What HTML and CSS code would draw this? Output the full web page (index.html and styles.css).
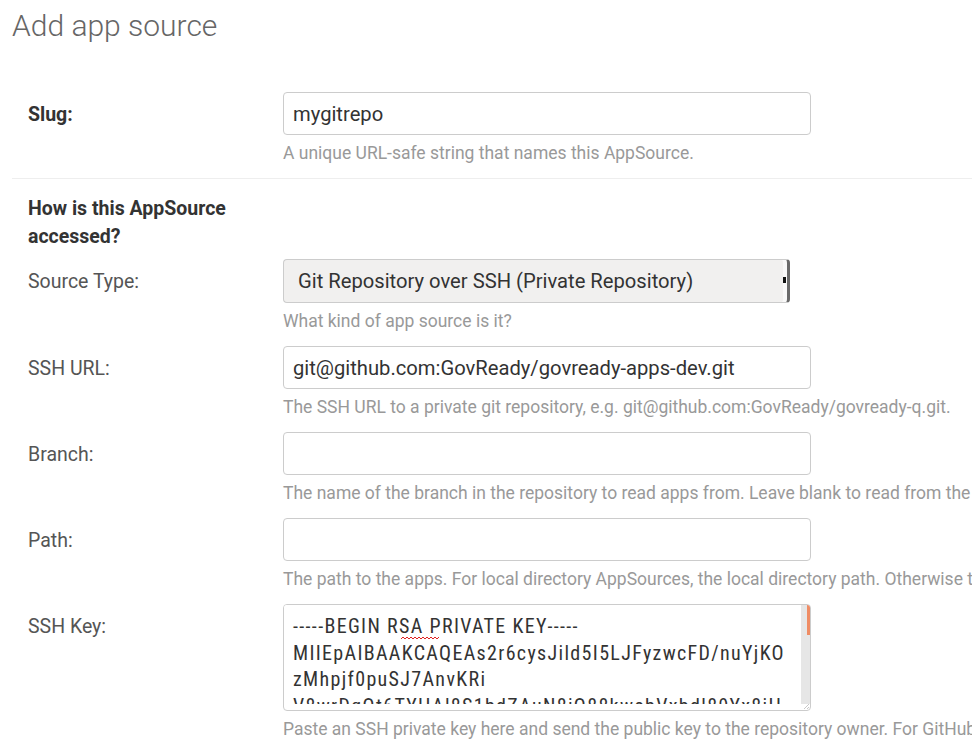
FILE: index.html
```html
<!DOCTYPE html>
<html lang="en">
<head>
<meta charset="utf-8">
<title>Add app source</title>
<link rel="stylesheet" href="styles.css">
</head>
<body>
<div class="page">
  <h1 class="title">Add app source</h1>
  <form class="form">
    <div class="row">
      <label class="label label-strong" for="slug">Slug:</label>
      <div class="field">
        <input class="control" id="slug" type="text" value="mygitrepo">
        <p class="help">A unique URL-safe string that names this AppSource.</p>
      </div>
    </div>
    <hr class="divider">
    <div class="row section">
      <div class="section-title">How is this AppSource accessed?</div>
    </div>
    <div class="row">
      <label class="label" for="stype">Source Type:</label>
      <div class="field">
        <div class="select-wrap">
          <select class="select" id="stype">
            <option>Git Repository over SSH (Private Repository)</option>
          </select>
        </div>
        <p class="help">What kind of app source is it?</p>
      </div>
    </div>
    <div class="row">
      <label class="label" for="sshurl">SSH URL:</label>
      <div class="field">
        <input class="control" id="sshurl" type="text" value="git@github.com:GovReady/govready-apps-dev.git">
        <p class="help">The SSH URL to a private git repository, e.g. git@github.com:GovReady/govready-q.git.</p>
      </div>
    </div>
    <div class="row">
      <label class="label" for="branch">Branch:</label>
      <div class="field">
        <input class="control" id="branch" type="text" value="">
        <p class="help">The name of the branch in the repository to read apps from. Leave blank to read from the default branch.</p>
      </div>
    </div>
    <div class="row">
      <label class="label" for="path">Path:</label>
      <div class="field">
        <input class="control" id="path" type="text" value="">
        <p class="help">The path to the apps. For local directory AppSources, the local directory path. Otherwise the path within the repository.</p>
      </div>
    </div>
    <div class="row">
      <label class="label" for="sshkey">SSH Key:</label>
      <div class="field">
        <div class="textarea-box">
          <div class="textarea-inner">
            <textarea class="textarea" id="sshkey" spellcheck="false">-----BEGIN RSA PRIVATE KEY-----
MIIEpAIBAAKCAQEAs2r6cysJild5I5LJFyzwcFD/nuYjKO
zMhpjf0puSJ7AnvKRi
V8wrDqQt6TYHAl8S1bdZAuN8iQ88kwebVxbdl89Yx8iHH
q3NwJtY0Lb2a8fQe7Hk1sVnR4mZpXcD9GuE6oTy
aB5kFhW2rLz8QmPjN3vXt0CeYi7UoSdKg1Hq
Yp4sLwZ9nAe2RbTg6VcXk0MfJu8DhQiO3tS
-----END RSA PRIVATE KEY-----</textarea>
            <div class="scrolltrack"><div class="thumb"></div></div>
          </div>
          <svg class="spell" width="38" height="4" viewBox="0 0 38 4"><path d="M0 3 L2 1 L4 3 L6 1 L8 3 L10 1 L12 3 L14 1 L16 3 L18 1 L20 3 L22 1 L24 3 L26 1 L28 3 L30 1 L32 3 L34 1 L36 3 L38 1" fill="none" stroke="#e02020" stroke-width="1"/></svg>
        </div>
        <p class="help">Paste an SSH private key here and send the public key to the repository owner. For GitHub repositories, add it as a deploy key.</p>
      </div>
    </div>
  </form>
</div>
</body>
</html>
```
FILE: styles.css
```css
html, body {
  margin: 0;
  padding: 0;
  overflow: hidden;
  background: #fff;
}
body {
  font-family: Roboto, "Liberation Sans", sans-serif;
  color: #333;
}
.page {
  width: 1100px;
  padding-left: 12px;
}
.title {
  margin: 8px 0 0 0;
  font-size: 30px;
  line-height: 36px;
  font-weight: 300;
  color: #666;
}
.form {
  margin-top: 48px;
}
.row {
  display: grid;
  grid-template-columns: 255px 1fr;
  padding-left: 16px;
  margin-bottom: 14px;
}
.label {
  font-size: 19.5px;
  line-height: 23px;
  padding-top: 11px;
  color: #555;
}
.label-strong {
  font-weight: 700;
  color: #333;
}
.field {
  min-width: 0;
}
.control {
  box-sizing: border-box;
  display: block;
  width: 528px;
  height: 43px;
  margin: 0;
  padding: 0 9px;
  border: 1px solid #ccc;
  border-radius: 4px;
  background: #fff;
  font-family: Roboto, "Liberation Sans", sans-serif;
  font-size: 20.2px;
  color: #333;
  outline: none;
}
.help {
  margin: 7px 0 0 0;
  font-size: 17.5px;
  line-height: 22px;
  color: #999;
  white-space: nowrap;
}
.divider {
  border: 0;
  border-top: 1px solid #eee;
  margin: 2px 0 0 0;
  height: 0;
}
.section {
  margin-top: 16px;
  margin-bottom: 8px;
}
.section-title {
  width: 235px;
  font-size: 19.5px;
  line-height: 28px;
  font-weight: 700;
  color: #333;
}
.select-wrap {
  position: relative;
  width: 507px;
}
.select {
  -webkit-appearance: none;
  appearance: none;
  box-sizing: border-box;
  display: block;
  width: 507px;
  height: 44px;
  margin: 0;
  padding: 0 14px;
  border: 1px solid #ccc;
  border-right: 3px solid #6a6a6a;
  border-radius: 4px;
  background: #f1f0ef;
  box-shadow: inset -4px 0 0 #f9f9f9;
  font-family: Roboto, "Liberation Sans", sans-serif;
  font-size: 20.2px;
  color: #333;
  outline: none;
}
.select-wrap::after {
  content: "";
  position: absolute;
  right: 4px;
  top: 18px;
  width: 3px;
  height: 6px;
  background: #111;
}
.textarea-box {
  position: relative;
  box-sizing: border-box;
  width: 528px;
  height: 107px;
  border: 1px solid #ccc;
  border-radius: 4px;
  padding-bottom: 6px;
  overflow: hidden;
  background: #fff;
}
.textarea-box::after {
  content: "";
  position: absolute;
  right: 1px;
  bottom: 1px;
  width: 5px;
  height: 5px;
  background: linear-gradient(135deg, transparent 40%, #c8c8c8 40%, #c8c8c8 55%, transparent 55%, transparent 72%, #c8c8c8 72%, #c8c8c8 87%, transparent 87%);
}
.textarea-inner {
  display: flex;
  height: 99px;
}
.textarea {
  box-sizing: border-box;
  display: block;
  flex: 1;
  min-width: 0;
  height: 99px;
  margin: 0;
  border: 0;
  padding: 8px 9px 0 9px;
  background: #fff;
  font-family: "Roboto Condensed", Roboto, sans-serif;
  font-stretch: condensed;
  font-size: 20px;
  letter-spacing: 1.33px;
  line-height: 26.5px;
  color: #333;
  outline: none;
  resize: none;
  overflow: hidden;
  white-space: pre-wrap;
}
.scrolltrack {
  display: flex;
  justify-content: flex-end;
  width: 9px;
  flex: none;
  background: #e6e6e6;
}
.thumb {
  width: 3px;
  height: 30px;
  background: #ef8c64;
}
.spell {
  position: absolute;
  left: 117px;
  top: 31px;
}
```
